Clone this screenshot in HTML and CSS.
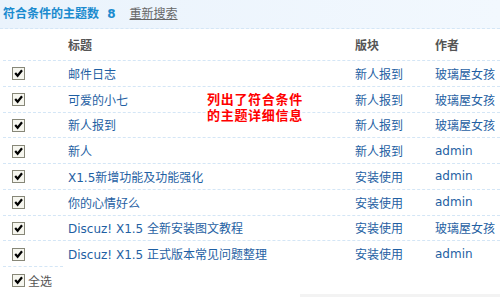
FILE: index.html
```html
<!DOCTYPE html>
<html lang="zh">

<head>
    <title>搜索结果</title>
    <meta charset="UTF-8">
    <link rel="stylesheet" href="styles.css">
</head>

<body>
    <div class="bar">
        <span class="count">符合条件的主题数 &nbsp;8</span>
        <a class="again" href="#">重新搜索</a>
    </div>
    <div class="list">
        <div class="row head">
            <span></span>
            <span>标题</span>
            <span>版块</span>
            <span>作者</span>
        </div>
        <div class="row">
            <span><i class="chk"><svg viewBox="0 0 10 10"><path d="M2 4.5 L4.2 7 L8.2 2"/></svg></i></span>
            <a href="#">邮件日志</a><a href="#">新人报到</a><a href="#">玻璃屋女孩</a>
        </div>
        <div class="row">
            <span><i class="chk"><svg viewBox="0 0 10 10"><path d="M2 4.5 L4.2 7 L8.2 2"/></svg></i></span>
            <a href="#">可爱的小七</a><a href="#">新人报到</a><a href="#">玻璃屋女孩</a>
        </div>
        <div class="row">
            <span><i class="chk"><svg viewBox="0 0 10 10"><path d="M2 4.5 L4.2 7 L8.2 2"/></svg></i></span>
            <a href="#">新人报到</a><a href="#">新人报到</a><a href="#">玻璃屋女孩</a>
        </div>
        <div class="row">
            <span><i class="chk"><svg viewBox="0 0 10 10"><path d="M2 4.5 L4.2 7 L8.2 2"/></svg></i></span>
            <a href="#">新人</a><a href="#">新人报到</a><a href="#">admin</a>
        </div>
        <div class="row">
            <span><i class="chk"><svg viewBox="0 0 10 10"><path d="M2 4.5 L4.2 7 L8.2 2"/></svg></i></span>
            <a href="#">X1.5新增功能及功能强化</a><a href="#">安装使用</a><a href="#">admin</a>
        </div>
        <div class="row">
            <span><i class="chk"><svg viewBox="0 0 10 10"><path d="M2 4.5 L4.2 7 L8.2 2"/></svg></i></span>
            <a href="#">你的心情好么</a><a href="#">安装使用</a><a href="#">admin</a>
        </div>
        <div class="row">
            <span><i class="chk"><svg viewBox="0 0 10 10"><path d="M2 4.5 L4.2 7 L8.2 2"/></svg></i></span>
            <a href="#">Discuz! X1.5 全新安装图文教程</a><a href="#">安装使用</a><a href="#">玻璃屋女孩</a>
        </div>
        <div class="row">
            <span><i class="chk"><svg viewBox="0 0 10 10"><path d="M2 4.5 L4.2 7 L8.2 2"/></svg></i></span>
            <a href="#">Discuz! X1.5 正式版本常见问题整理</a><a href="#">安装使用</a><a href="#">admin</a>
        </div>
        <div class="foot">
            <i class="chk"><svg viewBox="0 0 10 10"><path d="M2 4.5 L4.2 7 L8.2 2"/></svg></i>全选
        </div>
        <div class="note">列出了符合条件<br>的主题详细信息</div>
    </div>
    <div class="edge"></div>
</body>

</html>
```

FILE: styles.css
```css
body {
    margin: 0;
    font-family: "DejaVu Sans", "Noto Sans CJK SC", sans-serif;
    font-size: 12px;
    color: #555;
}

a {
    color: #1f5fa3;
    text-decoration: none;
}

.bar {
    height: 28px;
    line-height: 28px;
    padding-left: 3px;
    background: linear-gradient(to right, #eaf3fc, #f2f8fe);
    border-bottom: 1px dashed #d4e6f6;
}

.count {
    color: #1a8bcf;
    font-weight: bold;
}

.bar .again {
    margin-left: 10px;
    color: #666;
    text-decoration: underline;
}

.list {
    position: relative;
    margin-left: 3px;
}

.row {
    display: grid;
    grid-template-columns: 65px 287px 80px 1fr;
    align-items: center;
    height: 24.75px;
    border-top: 1px dashed #d4e6f6;
    white-space: nowrap;
}

.row.head {
    height: 31px;
    border-top: 0;
    font-weight: bold;
    color: #555;
}

.row > span:first-child {
    padding-left: 9px;
}

.chk {
    display: inline-flex;
    width: 11px;
    height: 11px;
    border: 1px solid #878778;
    background: #f6f6ef;
    vertical-align: middle;
}

.chk svg {
    width: 11px;
    height: 11px;
    fill: none;
    stroke: #000;
    stroke-width: 2;
}

.foot {
    display: flex;
    align-items: center;
    gap: 3px;
    width: 60px;
    height: 27px;
    padding-left: 9px;
    box-sizing: border-box;
    border-top: 1px dashed #d4e6f6;
    color: #555;
    white-space: nowrap;
}

.note {
    position: absolute;
    left: 204px;
    top: 63px;
    color: #ff0000;
    font-weight: bold;
    font-size: 13px;
    line-height: 16px;
    letter-spacing: 0.7px;
}

.edge {
    margin: 1px 0 0 300px;
    height: 3px;
    background: #f3f3f3;
}
```
